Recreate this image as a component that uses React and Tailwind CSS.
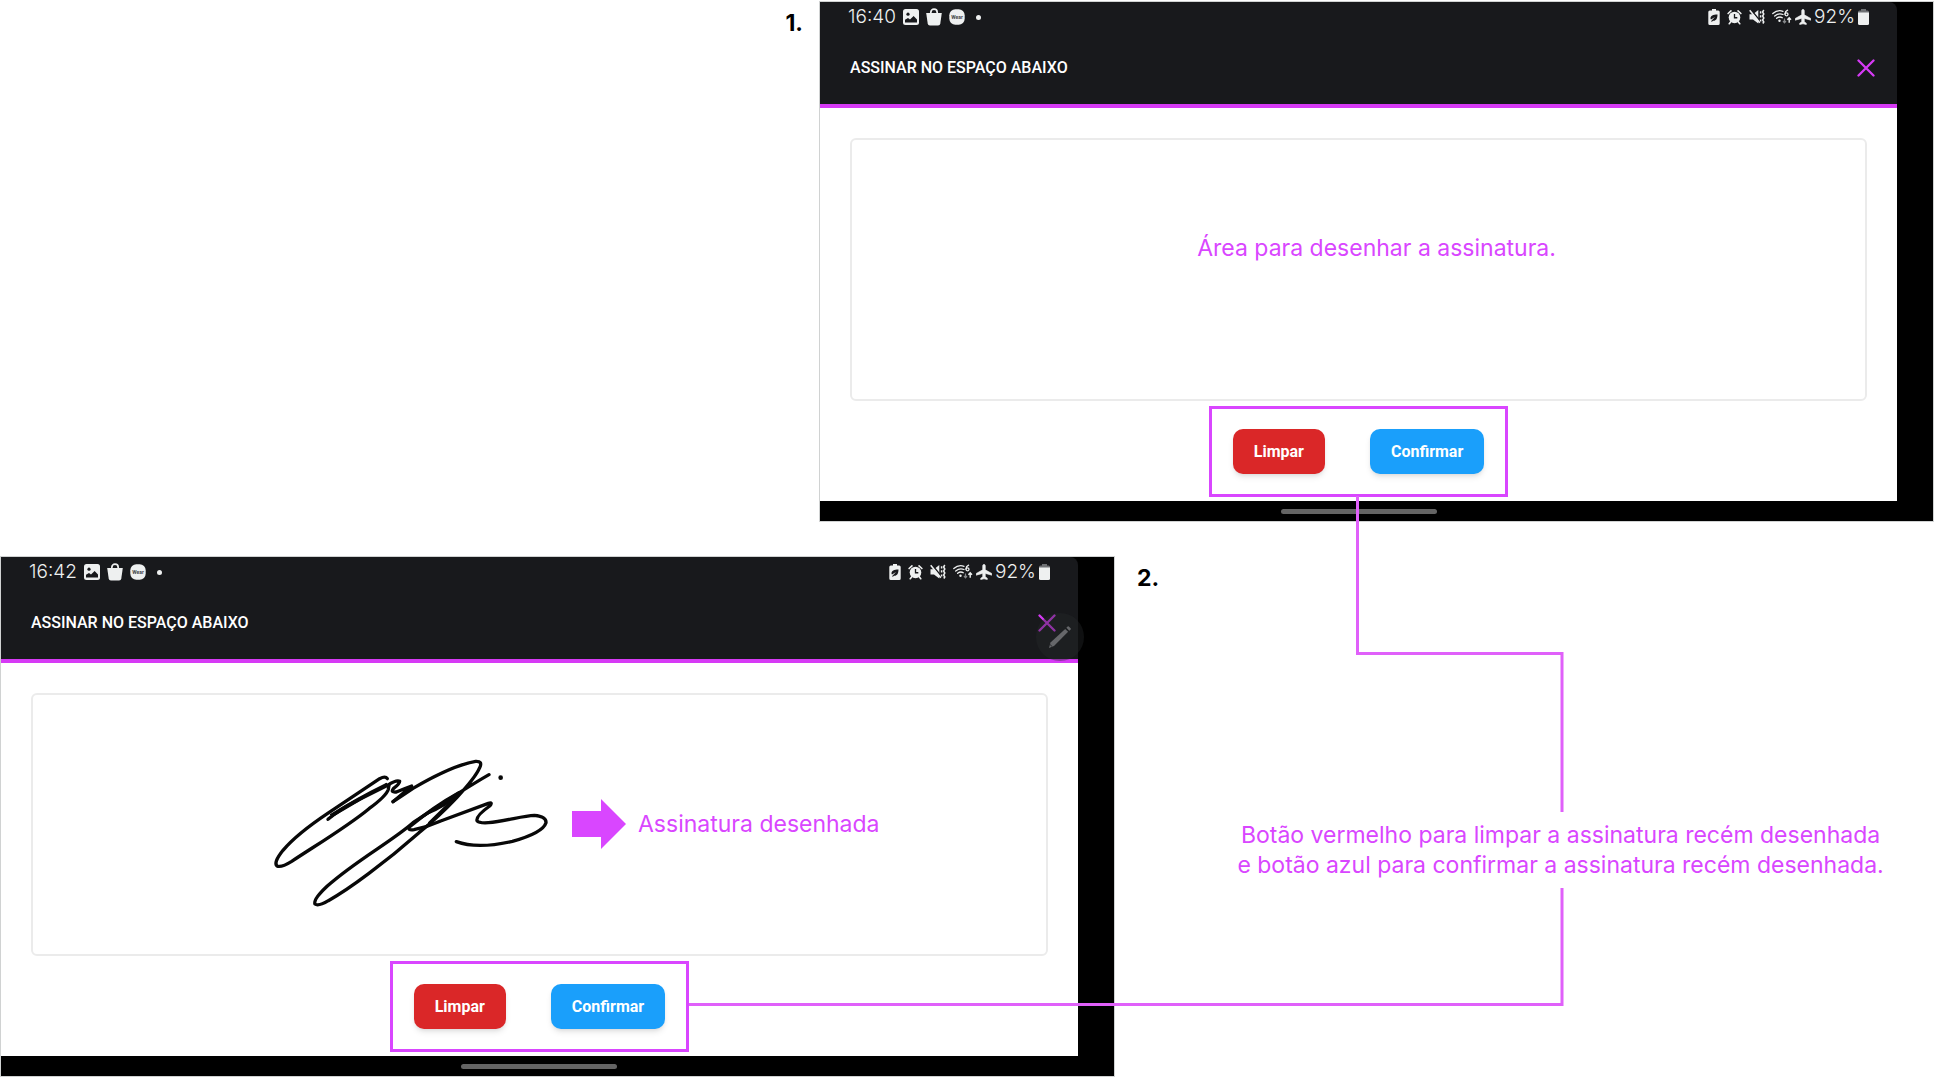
// App.jsx
import React from "react";

const SIGNATURE_STROKES = [
  "M385 118 Q379 109 362 118 L206 222 Q112 285 72 333 Q42 371 54 380 Q66 386 98 366 C180 312 270 258 330 208 C368 180 384 164 388 150 L390 136",
  "M207 240 Q240 212 290 186 L386 138 Q412 121 422 126 Q422 134 403 148 Q394 160 412 158 Q436 148 458 140 L434 160 L402 187",
  "M402 187 Q440 162 462 147 Q580 78 650 66 Q672 65 662 85 C645 125 560 215 480 280 C380 368 270 450 208 484 Q178 502 168 494 Q162 480 205 440 C290 364 400 305 462 250 C530 206 600 158 690 106",
  "M600 160 C560 182 500 222 452 262 Q444 274 465 271 Q505 263 545 245 L688 192 Q703 188 692 200 Q650 230 654 244 Q660 252 688 250 C740 246 790 229 826 228 Q862 231 861 250 C854 272 810 292 760 306 Q655 330 592 307",
];

function ImageIcon() {
  return (
    <svg width="16" height="16" viewBox="0 0 16 16" aria-hidden="true">
      <rect width="16" height="16" rx="2.5" fill="#eef0f0" />
      <circle cx="5" cy="5.2" r="1.6" fill="#18191c" />
      <path d="M2 13.5v-2.7l3-1.7 2 1.4 3.6-3.6 3.4 3.5v3.1z" fill="#18191c" />
    </svg>
  );
}

function BagIcon() {
  return (
    <svg width="16" height="18" viewBox="0 0 16 18" aria-hidden="true">
      <path d="M4.8 6V4.4a3.2 3.2 0 0 1 6.4 0V6" fill="none" stroke="#eef0f0" strokeWidth="1.7" />
      <path d="M0.2 5h15.6l-1.5 10.6q-.3 2-2.2 2H3.9q-1.9 0-2.2-2z" fill="#eef0f0" />
    </svg>
  );
}

function WearIcon() {
  return (
    <svg width="16" height="16" viewBox="0 0 16 16" aria-hidden="true">
      <rect x=".3" y=".3" width="15.4" height="15.4" rx="6" fill="#eef0f0" />
      <text x="8" y="10" textAnchor="middle" fontSize="5" fontWeight="700" fontFamily="Roboto, sans-serif" fill="#44464a">
        Wear
      </text>
    </svg>
  );
}

function BatterySaverIcon() {
  return (
    <svg width="12" height="16" viewBox="0 0 12 16" aria-hidden="true">
      <path d="M4 0h4v1.6h2.2q1.5 0 1.5 1.5v11.4q0 1.5-1.5 1.5H1.8Q.3 16 .3 14.5V3.1q0-1.5 1.5-1.5H4z" fill="#eef0f0" />
      <path d="M9.5 5.5C5 5.5 2.5 6.8 2.5 9.3c0 .6.2 1 .5 1.3L7 8l-4 4.3 1 .4.9-1C8 12 9.4 10 9.5 5.5z" fill="#18191c" />
    </svg>
  );
}

function AlarmIcon() {
  return (
    <svg width="15" height="16" viewBox="0 0 16 16" aria-hidden="true">
      <path d="M1.2 4.3 4.2 1.5M14.8 4.3l-3-2.8M4 13l-1.6 2.2M12 13l1.6 2.2" stroke="#eef0f0" strokeWidth="1.7" strokeLinecap="round" />
      <circle cx="8" cy="8.5" r="6.2" fill="#eef0f0" />
      <path d="M8 4.8v4h3" fill="none" stroke="#18191c" strokeWidth="1.4" />
    </svg>
  );
}

function MuteIcon() {
  return (
    <svg width="16" height="16" viewBox="0 0 16 16" aria-hidden="true">
      <path d="M.5 5.3H4L9.3 1v13.5L4 10.5H.5z" fill="#eef0f0" />
      <path d="M1.5 .2 12 13" stroke="#18191c" strokeWidth="1.5" />
      <path d="M.7 1.2 10.8 13.8" stroke="#eef0f0" strokeWidth="1.5" />
      <path d="M11.6 2.2v2.2M11.6 6.3v2.2M11.6 10.4v2.2" stroke="#eef0f0" strokeWidth="1.5" />
      <path d="M14.8 1l-1.2 2 1.2 2-1.2 2 1.2 2-1.2 2 1.2 2-1 1.5" fill="none" stroke="#eef0f0" strokeWidth="1.5" />
    </svg>
  );
}

function WifiIcon() {
  return (
    <svg width="20" height="16" viewBox="0 0 20 16" aria-hidden="true">
      <g fill="none" stroke="#eef0f0" strokeWidth="1.3" strokeLinecap="round">
        <path d="M.8 4.6Q5.5.4 11 2.3" />
        <path d="M2.7 7Q6.5 3.8 11 5.5" />
        <path d="M4.6 9.3Q7.5 7 10.3 8.7" />
        <path d="M15.6 1.2Q13 2.5 13 5" />
        <circle cx="14.5" cy="5.3" r="1.5" />
      </g>
      <circle cx="7.5" cy="11.8" r="1.2" fill="#eef0f0" />
      <path d="M12.5 9.5v4M11 12l1.5 1.8L14 12" fill="none" stroke="#85878a" strokeWidth="1.2" />
      <path d="M17.2 13.8V9M15.4 10.8l1.8-2 1.8 2" fill="none" stroke="#eef0f0" strokeWidth="1.4" />
    </svg>
  );
}

function PlaneIcon() {
  return (
    <svg width="16" height="16" viewBox="0 0 16 16" aria-hidden="true">
      <path d="M8 .3c.8 0 1.3.8 1.3 1.8v3.7l6.5 3.7v1.7L9.3 9.4v3.4l2 1.4v1.4L8 14.8l-3.3.8v-1.4l2-1.4V9.4L.2 11.2V9.5l6.5-3.7V2.1C6.7 1.1 7.2.3 8 .3z" fill="#eef0f0" stroke="#eef0f0" strokeWidth=".6" />
    </svg>
  );
}

function BatteryIcon() {
  return (
    <svg width="11" height="16" viewBox="0 0 11 16" aria-hidden="true">
      <path d="M3 0h5v1.5h1.5Q11 1.5 11 3v2H0V3q0-1.5 1.5-1.5H3z" fill="#6f7174" />
      <path d="M0 3.5h11v11q0 1.5-1.5 1.5h-8Q0 16 0 14.5z" fill="#eef0f0" />
    </svg>
  );
}

function StatusBar({ time }) {
  return (
    <div className="flex h-[30px] items-center justify-between px-7 font-[Inter,sans-serif] text-[19px] font-light text-[#eef0f0]">
      <div className="flex items-center gap-[7px]">
        <span>{time}</span>
        <ImageIcon />
        <BagIcon />
        <WearIcon />
        <span className="ml-1 size-[5px] rounded-full bg-[#eef0f0]" />
      </div>
      <div className="flex items-center gap-[7px]">
        <BatterySaverIcon />
        <AlarmIcon />
        <MuteIcon />
        <div className="flex items-center gap-[3px]">
          <WifiIcon />
          <PlaneIcon />
          <span>92%</span>
          <BatteryIcon />
        </div>
      </div>
    </div>
  );
}

function PencilBubble() {
  return (
    <div className="absolute -right-[6px] top-[56px] flex size-12 items-center justify-center rounded-full bg-[#26272a]/40">
      <svg width="26" height="26" viewBox="0 0 26 26" aria-hidden="true">
        <path d="M2 24l1.5-5.5L18.2 4.9l2.9 2.9L7 22z" fill="#66676a" />
        <path d="M19.4 3.7l1.2-1.2q.6-.5 1.2 0l1.8 1.8q.5.6 0 1.2l-1.3 1.2z" fill="#66676a" />
        <path d="M3 20.5l2.3 2.2" stroke="#2a2b2d" strokeWidth="1" />
      </svg>
    </div>
  );
}

function SignatureScreen({ time, pencil, children }) {
  return (
    <section className="w-[57.65%] shrink-0 border border-[#d0d2d2] bg-black">
      <div className="relative mr-9">
        <header className="rounded-tr-lg border-b-4 border-[#d63af5] bg-[#18191c]">
          <StatusBar time={time} />
          <div className="flex h-[72px] items-center justify-between pl-[30px] pr-[22px]">
            <h2 className="font-[Roboto,sans-serif] text-[16px] font-medium text-white">
              ASSINAR NO ESPAÇO ABAIXO
            </h2>
            <button type="button" aria-label="Fechar" className="cursor-pointer">
              <svg width="18" height="18" viewBox="0 0 18 18" aria-hidden="true">
                <path d="M1.5 1.5l15 15M16.5 1.5l-15 15" stroke="#d63af5" strokeWidth="2.3" strokeLinecap="round" />
              </svg>
            </button>
          </div>
        </header>
        {pencil && <PencilBubble />}

        <div className="flex flex-col items-center bg-white px-[30px] pb-1 pt-[30px]">
          <div className="flex h-[263px] w-full items-center rounded-md border-2 border-[#ebebeb]">
            {children}
          </div>
          <div className="mt-[5px] flex gap-[45px] border-3 border-[#d946ff] px-[21px] py-5 font-[Roboto,sans-serif] text-[16px] font-bold text-white">
            <button type="button" className="h-[45px] cursor-pointer rounded-[10px] bg-[#da2728] px-[21px] shadow-md">
              Limpar
            </button>
            <button type="button" className="h-[45px] cursor-pointer rounded-[10px] bg-[#1a9ffb] px-[21px] shadow-md">
              Confirmar
            </button>
          </div>
        </div>
        <div className="flex h-5 items-center justify-center">
          <div className="h-[5px] w-[156px] rounded-full bg-[#646464]" />
        </div>
      </div>
    </section>
  );
}

export default function App() {
  return (
    <main className="relative flex min-h-screen flex-col gap-[34px] bg-white pt-px font-[Inter,sans-serif] text-[23px] leading-[30px] text-[#d946ff]">
      {/* STEP 1 */}
      <div className="flex justify-end gap-4">
        <span className="pt-[7px] font-bold text-black">1.</span>
        <SignatureScreen time="16:40">
          <p className="w-full pb-11 pl-9 text-center">Área para desenhar a assinatura.</p>
        </SignatureScreen>
      </div>

      {/* STEP 2 */}
      <div className="flex">
        <SignatureScreen time="16:42" pencil>
          <div className="flex items-center pb-[2px] pl-[238px]">
            <svg className="mt-[18px]" width="280" height="154" viewBox="36 50 840 462" role="img" aria-label="Assinatura">
              <g fill="none" stroke="#080808" strokeWidth="10" strokeLinecap="round" strokeLinejoin="round">
                {SIGNATURE_STROKES.map((d) => (
                  <path key={d} d={d} />
                ))}
                <path d="M215 226 Q290 178 382 133 Q300 186 215 234" strokeWidth="5" />
                <path d="M470 246 Q530 202 598 166 Q560 202 505 224z" fill="#080808" strokeWidth="5" />
                <path d="M540 225 Q570 200 598 164 L510 250" strokeWidth="6" />
              </g>
              <circle cx="725" cy="115" r="7" fill="#080808" />
            </svg>
            <svg className="ml-[21px]" width="54" height="50" viewBox="0 0 54 50" aria-hidden="true">
              <path d="M0 12h29V0l25 25-25 25V38H0z" fill="#d946ff" />
            </svg>
            <p className="ml-3">Assinatura desenhada</p>
          </div>
        </SignatureScreen>
        <div className="flex flex-1 pl-[22px]">
          <span className="pt-[7px] font-bold text-black">2.</span>
          <div className="flex flex-1 items-center justify-center pl-7 pt-[66px]">
            <p className="relative z-10 whitespace-nowrap bg-white py-2 text-center">
              Botão vermelho para limpar a assinatura recém desenhada
              <br />
              e botão azul para confirmar a assinatura recém desenhada.
            </p>
          </div>
        </div>
      </div>

      {/* Connector between both button groups and the note */}
      <svg className="pointer-events-none absolute inset-0 size-full" viewBox="0 0 1934 1077" preserveAspectRatio="none" aria-hidden="true">
        <path d="M1357.5 496V653.5H1562V1004.5H689" fill="none" stroke="#e060fa" strokeWidth="3" />
      </svg>
    </main>
  );
}
